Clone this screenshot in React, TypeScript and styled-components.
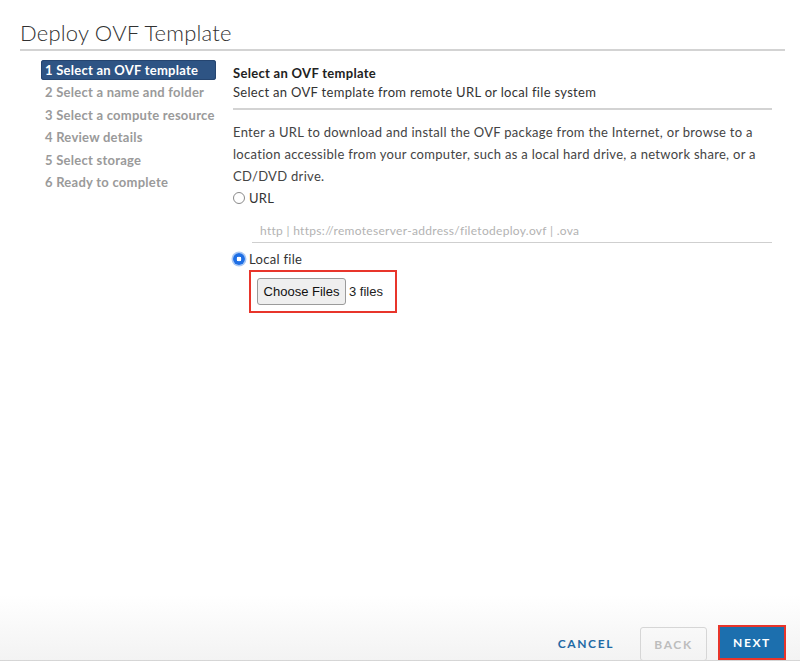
import React from 'react'
import styled, { createGlobalStyle, css } from 'styled-components'

const GlobalStyle = createGlobalStyle`
  html, body {
    margin: 0;
    padding: 0;
    background: #fff;
  }
  body {
    font-family: Lato, 'Noto Sans', sans-serif;
    color: #333;
  }
`

const Frame = styled.div`
  height: 661px;
  display: flex;
  flex-direction: column;
  box-sizing: border-box;
  background: linear-gradient(to bottom, #fff 0%, #fff 90%, #f3f3f3 99.8%, #c4c4c4 100%);
`

const Header = styled.div`
  margin: 0 15px 0 20px;
  padding-top: 20px;
  padding-bottom: 3px;
  border-bottom: 2px solid #d3d3d3;
`

const Title = styled.h1`
  margin: 0;
  font-size: 22px;
  line-height: 26px;
  font-weight: 300;
  color: #313131;
  letter-spacing: 0.2px;
`

const Body = styled.div`
  flex: 1;
  display: flex;
  gap: 17px;
  padding: 9px 28px 0 41px;
`

const Steps = styled.ol`
  list-style: none;
  margin: 0;
  padding: 0;
  width: 175px;
  flex-shrink: 0;
  display: flex;
  flex-direction: column;
  gap: 2.4px;
`

const Step = styled.li<{ active?: boolean }>`
  height: 20px;
  line-height: 20px;
  padding-left: 4px;
  font-size: 13px;
  font-weight: 700;
  letter-spacing: 0.25px;
  color: #9a9a9a;
  border-radius: 3px;
  white-space: nowrap;
  ${props =>
    props.active &&
    css`
      background: #2e5484;
      color: #fff;
      box-shadow: inset 0 0 0 1px #254570;
    `}
`

const Content = styled.div`
  flex: 1;
  padding-top: 4px;
  letter-spacing: 0.3px;
`

const SectionHead = styled.div`
  padding-bottom: 6px;
  border-bottom: 2px solid #d3d3d3;
`

const SectionTitle = styled.div`
  font-size: 13px;
  line-height: 19px;
  font-weight: 700;
  color: #222;
`

const SectionSub = styled.div`
  font-size: 13px;
  line-height: 19px;
  color: #333;
`

const Description = styled.p`
  margin: 11px 0 0;
  font-size: 13px;
  line-height: 22px;
  color: #444;
`

const RadioRow = styled.label`
  display: flex;
  align-items: center;
  gap: 4px;
  height: 22px;
  font-size: 13px;
  color: #333;
`

const RadioDot = styled.span<{ checked?: boolean }>`
  width: 12px;
  height: 12px;
  border-radius: 50%;
  box-sizing: border-box;
  flex-shrink: 0;
  border: 1px solid #8a8a8a;
  background: #fff;
  ${props =>
    props.checked &&
    css`
      border: none;
      background: radial-gradient(circle, #fff 0 2.2px, #1f6fe5 2.6px);
      box-shadow: 0 0 0 1.5px #a9c8f5;
    `}
`

const UrlInput = styled.input`
  display: block;
  box-sizing: border-box;
  width: calc(100% - 19px);
  margin: 10px 0 5px 19px;
  height: 24px;
  padding: 0 8px;
  border: none;
  border-bottom: 1px solid #cfcfcf;
  font-family: inherit;
  font-size: 12px;
  letter-spacing: 0.3px;
  color: #333;
  outline: none;
  &::placeholder {
    color: #b3b3b3;
  }
`

const Highlight = styled.div`
  display: inline-flex;
  align-items: center;
  gap: 3px;
  margin-left: 16px;
  box-sizing: border-box;
  width: 148px;
  height: 43px;
  padding: 0 6px 1px;
  border: 2px solid #e8352b;
  letter-spacing: 0;
`

const FileButton = styled.button`
  height: 27px;
  width: 89px;
  padding: 0;
  border: 1px solid #9b9b9b;
  border-radius: 3px;
  background: #efefef;
  font-family: 'Liberation Sans', Arial, sans-serif;
  font-size: 13px;
  color: #111;
`

const FileCount = styled.span`
  font-family: 'Liberation Sans', Arial, sans-serif;
  font-size: 13px;
  color: #222;
`

const Footer = styled.div`
  display: flex;
  justify-content: flex-end;
  align-items: flex-end;
  gap: 11px;
  padding-right: 14px;
  height: 36px;
`

const ActionButton = styled.button<{ variant: 'flat' | 'outline' | 'primary' }>`
  height: 35px;
  box-sizing: border-box;
  padding: 0 12px;
  font-family: inherit;
  font-size: 12px;
  font-weight: 700;
  letter-spacing: 1.6px;
  border-radius: 3px;
  background: transparent;
  border: 1px solid transparent;
  ${props =>
    props.variant === 'flat' &&
    css`
      color: #1f6aa5;
      margin-right: 2px;
    `}
  ${props =>
    props.variant === 'outline' &&
    css`
      width: 67px;
      color: #bdbdbd;
      border-color: #d6d6d6;
      height: 34px;
    `}
  ${props =>
    props.variant === 'primary' &&
    css`
      width: 68px;
      color: #fff;
      background: #1c6fae;
      border: 2px solid #e8352b;
      border-radius: 0;
      margin-bottom: 1px;
    `}
`

const steps = [
  '1 Select an OVF template',
  '2 Select a name and folder',
  '3 Select a compute resource',
  '4 Review details',
  '5 Select storage',
  '6 Ready to complete',
]

export default function App() {
  return (
    <>
      <GlobalStyle />
      <Frame>
        <Header>
          <Title>Deploy OVF Template</Title>
        </Header>
        <Body>
          <Steps>
            {steps.map((s, i) => (
              <Step key={s} active={i === 0}>
                {s}
              </Step>
            ))}
          </Steps>
          <Content>
            <SectionHead>
              <SectionTitle>Select an OVF template</SectionTitle>
              <SectionSub>Select an OVF template from remote URL or local file system</SectionSub>
            </SectionHead>
            <Description>
              Enter a URL to download and install the OVF package from the Internet, or browse to a
              location accessible from your computer, such as a local hard drive, a network share, or a
              CD/DVD drive.
            </Description>
            <RadioRow>
              <RadioDot />
              URL
            </RadioRow>
            <UrlInput placeholder="http | https://remoteserver-address/filetodeploy.ovf | .ova" />
            <RadioRow>
              <RadioDot checked />
              Local file
            </RadioRow>
            <Highlight>
              <FileButton>Choose Files</FileButton>
              <FileCount>3 files</FileCount>
            </Highlight>
          </Content>
        </Body>
        <Footer>
          <ActionButton variant="flat">CANCEL</ActionButton>
          <ActionButton variant="outline">BACK</ActionButton>
          <ActionButton variant="primary">NEXT</ActionButton>
        </Footer>
      </Frame>
    </>
  )
}
